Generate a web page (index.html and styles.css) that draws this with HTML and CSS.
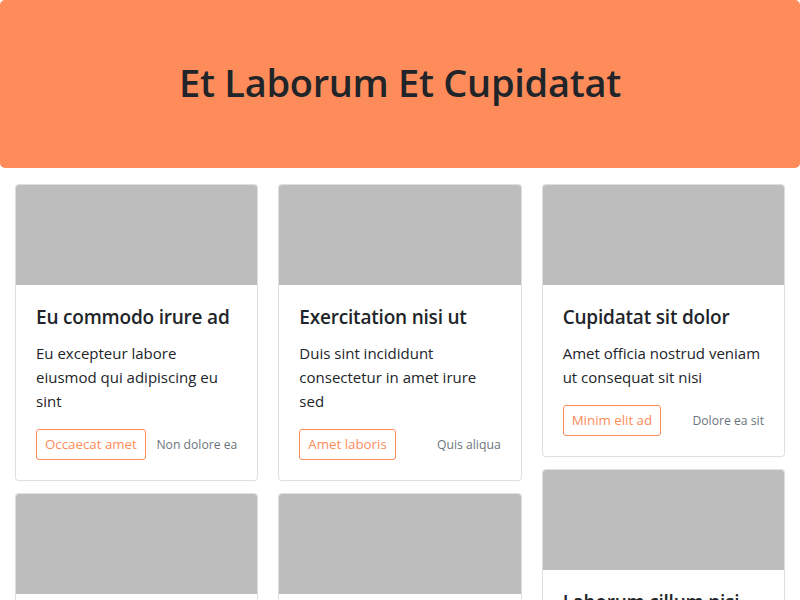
FILE: index.html
```html
<!DOCTYPE html>
<html lang="en">
<head>
<meta charset="utf-8">
<title>Et Laborum Et Cupidatat</title>
<link rel="stylesheet" href="styles.css">
</head>
<body>
<header class="hero">
  <h1 class="hero-title">Et Laborum Et Cupidatat</h1>
</header>
<main class="grid">
  <div class="col">
    <article class="card">
      <div class="card-img"></div>
      <div class="card-body">
        <h5 class="card-title">Eu commodo irure ad</h5>
        <p class="card-text">Eu excepteur labore eiusmod qui adipiscing eu sint</p>
        <div class="card-foot">
          <a class="btn" href="#">Occaecat amet</a>
          <small class="meta">Non dolore ea</small>
        </div>
      </div>
    </article>
    <article class="card">
      <div class="card-img"></div>
      <div class="card-body">
        <h5 class="card-title">Aliqua velit minim</h5>
        <p class="card-text">Sunt ex tempor officia nulla consequat dolore</p>
        <div class="card-foot">
          <a class="btn" href="#">Velit esse</a>
          <small class="meta">Anim ipsum</small>
        </div>
      </div>
    </article>
  </div>
  <div class="col">
    <article class="card">
      <div class="card-img"></div>
      <div class="card-body">
        <h5 class="card-title">Exercitation nisi ut</h5>
        <p class="card-text">Duis sint incididunt consectetur in amet irure sed</p>
        <div class="card-foot">
          <a class="btn" href="#">Amet laboris</a>
          <small class="meta">Quis aliqua</small>
        </div>
      </div>
    </article>
    <article class="card">
      <div class="card-img"></div>
      <div class="card-body">
        <h5 class="card-title">Magna proident do</h5>
        <p class="card-text">Lorem ipsum dolor sit amet consectetur</p>
        <div class="card-foot">
          <a class="btn" href="#">Nulla enim</a>
          <small class="meta">Ut labore</small>
        </div>
      </div>
    </article>
  </div>
  <div class="col">
    <article class="card">
      <div class="card-img"></div>
      <div class="card-body">
        <h5 class="card-title">Cupidatat sit dolor</h5>
        <p class="card-text">Amet officia nostrud veniam ut consequat sit nisi</p>
        <div class="card-foot">
          <a class="btn" href="#">Minim elit ad</a>
          <small class="meta">Dolore ea sit</small>
        </div>
      </div>
    </article>
    <article class="card">
      <div class="card-img"></div>
      <div class="card-body">
        <h5 class="card-title">Laborum cillum nisi</h5>
        <p class="card-text">Esse deserunt fugiat est mollit aute</p>
        <div class="card-foot">
          <a class="btn" href="#">Irure sunt</a>
          <small class="meta">Elit culpa</small>
        </div>
      </div>
    </article>
  </div>
</main>
</body>
</html>
```
FILE: styles.css
```css
* { box-sizing: border-box; }
html, body { margin: 0; padding: 0; background: #fff; }
body {
  font-family: "Open Sans", "Noto Sans", sans-serif;
  color: #212529;
  font-size: 15px;
  line-height: 24px;
}
.hero {
  background: #fe8c5a;
  border-radius: 5px;
  height: 168px;
  display: flex;
  align-items: center;
  justify-content: center;
  margin-bottom: 16px;
}
.hero-title {
  margin: 0;
  font-size: 38px;
  font-weight: 600;
  line-height: 48px;
  letter-spacing: -0.3px;
  color: #212529;
  padding-bottom: 4px;
}
.grid {
  display: flex;
  gap: 20px;
  padding: 0 15px;
  align-items: flex-start;
}
.col {
  flex: 1 1 0;
  min-width: 0;
  display: flex;
  flex-direction: column;
  gap: 12px;
}
.card {
  border: 1px solid rgba(0, 0, 0, 0.125);
  border-radius: 4px;
  overflow: hidden;
  background: #fff;
}
.card-img {
  height: 100px;
  background: #bdbdbd;
}
.card-body { padding: 20px; }
.card-title {
  margin: 0 0 12px;
  font-size: 19px;
  font-weight: 600;
  line-height: 24px;
  letter-spacing: -0.2px;
  color: #212529;
}
.card-text { margin: 0 0 16px; }
.card-foot {
  display: flex;
  justify-content: space-between;
  align-items: center;
}
.btn {
  display: inline-block;
  border: 1px solid #fe8c5a;
  color: #fe8c5a;
  border-radius: 3px;
  padding: 4px 8px;
  font-size: 13.3px;
  line-height: 21px;
  text-decoration: none;
}
.meta {
  font-size: 12.2px;
  color: #6c757d;
  line-height: 19px;
}
```
